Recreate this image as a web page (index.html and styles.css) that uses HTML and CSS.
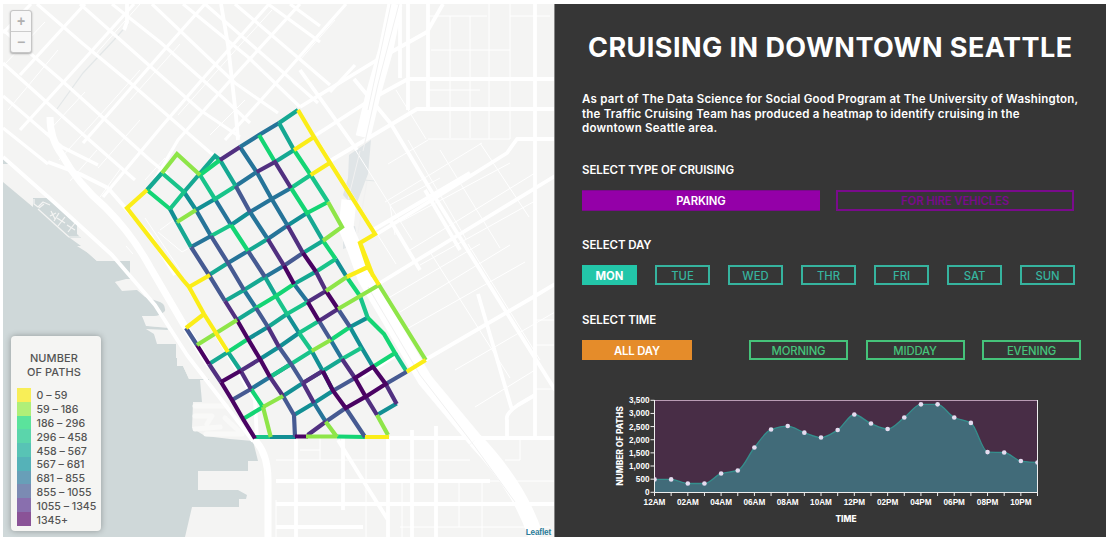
FILE: index.html
```html
<!DOCTYPE html>
<html lang="en">
<head>
<meta charset="utf-8">
<title>Cruising in Downtown Seattle</title>
<link rel="stylesheet" href="styles.css">
</head>
<body>
<main class="app">
  <section class="map">
    <svg class="map-canvas" viewBox="3 4 551 533" width="551" height="533">
      <rect class="land" x="3" y="4" width="552" height="533"/>
      <g class="water">
        <path d="M3 182L70 238L81 246L88 253L97 261H130V279L115 282L127 290H137L145 297L157 301Q166 303 165 311Q160 316 154 316H142L146 326L167 327L168 330L146 329L154 334L157 344H176V358H177V366H183L189 379H209V380H200L202 402H193L192 428L205 436L230 439L253 441L258 461H248V471H198V490H238L247 495L246 499H239V507H192L185 537H3Z"/>
        <path d="M3 158L13 164H3ZM33 198H47L58 205L68 217L77 224V234L81 238H70L33 208Z"/>
      </g>
      <g class="land-fill">
        <path d="M77 246H130V261H97L88 253ZM126 279L115 282L122 291L136 290L142 279ZM142 316L148 326L168 328L176 318ZM154 333L158 344L182 343V333ZM183 366L189 379L208 378V366Z"/>
      </g>
      <g class="street dock"><path d="M34 199V204L38 207L43 202L50 205M39 208L44 204M38 209L69 237H80M51 211L55 219M50 216L56 213M59 213L54 221M65 217L58 226M57 218L65 223M75 223L68 232M67 225L75 230M177 348H185M177 353H185M177 358H185"/></g>
      <g class="street pier"><path d="M195 406H226M195 416H212L207 424M195 429L220 427M206 434H242L225 418"/></g>
      <g class="green">
        <path d="M349 155L371 140L368 174L355 208L343 195L348 178ZM343 229L355 226L358 244L343 249Z"/>
        <path class="rail" d="M128 24L114 40L83 73L57 109M364 180L375 181"/>
      </g>
      <g class="street minor" id="blocks"></g>
      <g class="street mid">
        <path d="M3 33L31 4M20 75L85 4M20 130L70 75L134 4M83 143L165 49L205 4M103 197L162 126L200 82L269 4M152 184L178 140L228 83L300 4M225 140L270 90L346 4M330 92L355 65"/>
        <path d="M37 4L82 43L128 81L213 155M80 4L143 60L200 110L240 137M112 4L160 42L222 97L250 123M152 4L235 83L278 113M183 4L248 57L300 107M205 4L276 66L318 103M268 4L320 42M235 4L330 85M3 30L60 79L150 160L168 175M3 63L62 116L135 180M3 96L62 147L98 165M3 128L48 164M290 4L320 26"/>
      </g>
      <g class="street wide">
        <path d="M127 4V22L124 30M221 4L228 45L236 116L238 140M3 157L55 203L112 255L155 305L187 355L253 441M48 162L80 174L108 188L128 211L150 235L175 275M190 290L255 400L257 440"/>
        <path d="M443 4L427 32L377 60L300 107M555 79H408L375 97L316 135M555 109H417L330 161M555 139H517L507 153L440 195L377 234M555 176L460 234L375 286M400 4V78M408 4V110M428 4V108M535 4V437M373 230L470 173M354 79L391 124L436 199L500 302L555 390M300 70L357 150M390 220L420 270M425 190L460 250"/>
        <path d="M390 438H555M276 481H490M276 504H555M276 527H363M343 438V510M296 437V537M388 437V537M412 430V537M436 426V537M338 440L359 474L388 520M398 354L362 377M425 360L535 296L555 284M478 294L512 410M507 437V420Q505 414 518 405L535 395"/>
      </g>
      <g class="street freeway">
        <path d="M50 117Q50 139 62 155Q78 184 105 207Q132 234 150 267L184 325L210 366M253 438Q268 452 268 480V537"/>
        <path class="major" d="M395 4L386 49L373 95L363 137M349 200L346 228L355 250L365 278L425 380L475 440"/>
        <path class="major" d="M475 440Q520 487 536 537"/>
      </g>
      <g class="rail"><path d="M391 4L368 110M399 4L378 84L363 151M368 287L420 375L470 440L515 502M360 151L348 200M367 181L358 233"/></g>
      <g class="roads" id="roads"></g>
    </svg>
    <div class="zoom-control"><button>+</button><button>−</button></div>
    <div class="legend">
      <h2>NUMBER<br>OF PATHS</h2>
      <ul>
        <li><i class="y"></i><span>0 – 59</span></li>
        <li><i class="l"></i><span>59 – 186</span></li>
        <li><i class="g"></i><span>186 – 296</span></li>
        <li><i class="t"></i><span>296 – 458</span></li>
        <li><i class="s"></i><span>458 – 567</span></li>
        <li><i class="c"></i><span>567 – 681</span></li>
        <li><i class="b"></i><span>681 – 855</span></li>
        <li><i class="i"></i><span>855 – 1055</span></li>
        <li><i class="p"></i><span>1055 – 1345</span></li>
        <li><i class="d"></i><span>1345+</span></li>
      </ul>
    </div>
    <a class="attribution">Leaflet</a>
  </section>
  <section class="panel">
    <h1>CRUISING IN DOWNTOWN SEATTLE</h1>
    <p class="intro">As part of The Data Science for Social Good Program at The University of Washington,<br>the Traffic Cruising Team has produced a heatmap to identify cruising in the<br>downtown Seattle area.</p>
    <h3>SELECT TYPE OF CRUISING</h3>
    <div class="types"><button class="active">PARKING</button><button>FOR HIRE VEHICLES</button></div>
    <h3>SELECT DAY</h3>
    <div class="days"><button class="active">MON</button><button>TUE</button><button>WED</button><button>THR</button><button>FRI</button><button>SAT</button><button>SUN</button></div>
    <h3>SELECT TIME</h3>
    <div class="times"><button class="active">ALL DAY</button><button>MORNING</button><button>MIDDAY</button><button>EVENING</button></div>
    <svg class="chart" id="chart" viewBox="600 390 460 140" width="460" height="140"></svg>
  </section>
</main>
<script src="app.js"></script>
</body>
</html>
```
FILE: styles.css
```css
* { box-sizing: border-box; }
body { margin: 0; background: #fff; font-family: Inter, "Liberation Sans", sans-serif; }
.app { display: flex; width: 1109px; height: 539px; padding: 4px 3px 2px; overflow: hidden; }
button { font-family: inherit; padding: 0; }

.map { position: relative; width: 552px; height: 533px; flex: none; border-right: 1px solid #858585; }
.map-canvas { display: block; }
.land, .land-fill { fill: #f4f4f3; }
.water { fill: #cfd8d9; }
.green { fill: #e0e5e7; }
.green .rail { stroke: #e3e7e8; stroke-width: 1.2; fill: none; }
.street { fill: none; stroke: #fff; stroke-linejoin: round; }
.pier { stroke-width: 5; stroke: #f9f9f8; stroke-linecap: round; }
.dock { stroke-width: 1.2; stroke: #f4f4f3; }
.minor { stroke-width: 1; }
.mid { stroke-width: 3.2; }
.wide { stroke-width: 3.8; }
.freeway { stroke-width: 7; }
.major { stroke-width: 15; }
.rail { fill: none; stroke: #f1f1f1; stroke-width: 1; }
.roads { fill: none; stroke-width: 4.2; stroke-linecap: butt; }
.roads .y { stroke: #fbed18; }
.roads .l { stroke: #8ee548; }
.roads .g { stroke: #14d574; }
.roads .t { stroke: #19c48a; }
.roads .s { stroke: #15a892; }
.roads .c { stroke: #128f94; }
.roads .b { stroke: #267499; }
.roads .i { stroke: #465a92; }
.roads .p { stroke: #513080; }
.roads .d { stroke: #4a0363; }

.zoom-control { position: absolute; left: 7px; top: 6px; width: 22px; height: 43px; display: flex; flex-direction: column; border: 1px solid #c6c6c6; border-radius: 3px; background: #f8f8f8; box-shadow: 0 1px 2px #aaa; }
.zoom-control button { flex: 1; border: 0; background: none; color: #b0b0b0; font: 700 14px/20px "Liberation Sans", sans-serif; }
.zoom-control button + button { border-top: 1px solid #ccc; }
.legend { position: absolute; left: 8px; top: 332px; width: 90px; height: 195px; padding: 15px 6px 0; background: #f5f5f3; border-radius: 4px; box-shadow: 0 0 6px rgba(0,0,0,.3); color: #545454; }
.legend h2 { margin: 0 0 9px; text-align: center; font-size: 11px; line-height: 14px; font-weight: 500; letter-spacing: .1px; padding-right: 4px; }
.legend ul { margin: 0; padding: 0; list-style: none; }
.legend li { display: flex; height: 13.8px; gap: 5.5px; align-items: center; font-size: 10.6px; font-weight: 500; white-space: nowrap; }
.legend span { padding-top: 2px; }
.legend i { width: 14px; height: 14px; flex: none; }
.legend .y { background: #f8ee57; }
.legend .l { background: #b0ef78; }
.legend .g { background: #5be39c; }
.legend .t { background: #5bd5ab; }
.legend .s { background: #58c3b5; }
.legend .c { background: #55b2b8; }
.legend .b { background: #689fb8; }
.legend .i { background: #7b8bb3; }
.legend .p { background: #896fae; }
.legend .d { background: #8a5397; }
.attribution { position: absolute; right: 3px; bottom: 0; font: 700 8.2px/8px "Liberation Sans", sans-serif; letter-spacing: -.15px; color: #2b7c98; }

.panel { flex: none; width: 551px; height: 533px; background: #363636; color: #fff; padding: 0 0 0 27px; }
h1 { margin: 27px 0 0 6px; font-size: 27px; line-height: 34px; font-weight: 700; white-space: nowrap; letter-spacing: .44px; }
.intro { margin: 27.2px 0 0; font-size: 11.5px; line-height: 14.6px; font-weight: 600; white-space: nowrap; letter-spacing: .22px; }
h3 { margin: 0; font-size: 11.5px; line-height: 14px; font-weight: 600; white-space: nowrap; letter-spacing: -.1px; }
.intro + h3 { margin-top: 27px; }
.types + h3, .days + h3 { margin-top: 28px; }
.types, .days, .times { display: flex; margin-top: 13px; height: 20px; }
.types button, .days button, .times button { height: 20px; background: none; border: 2px solid; font-size: 11.3px; line-height: 14px; padding-top: 2px; font-weight: 500; }
.types { gap: 16px; }
.types button { width: 238px; color: #7a0b8c; height: 21px; font-weight: 600; letter-spacing: -.1px; }
.types .active { background: #9400a8; border-color: #7a098b; border-width: 1px 0; color: #fff; }
.days { gap: 18px; }
.days button { width: 55px; color: #36b49f; }
.days .active { background: #23c6a9; border-color: #23c6a9; color: #fff; font-weight: 700; }
.times { gap: 17.5px; }
.times button { width: 99px; color: #45c37a; letter-spacing: -.15px; }
.times .active { width: 110px; margin-right: 39.5px; background: #e58c2a; border-color: #e58c2a; color: #fff; font-weight: 600; }

.chart { display: block; margin: 30px 0 0 18px; }
.chart text { fill: #fff; font: 700 8.2px "Liberation Sans", sans-serif; }
.chart .plot { fill: #482d46; }
.chart .area { fill: #416b79; }
.chart .line { fill: none; stroke: #358f8d; stroke-width: 1.3; }
.chart .axis { fill: none; stroke: #eee; stroke-width: 1; }
.chart .frame { fill: none; stroke: #b99bb4; stroke-width: 1; }
.chart circle { fill: #e5dcf0; }
.chart .title { font: 800 8.4px Inter, sans-serif; }
```
FILE: app.js
```js
const NS = 'http://www.w3.org/2000/svg';
function add(parent, tag, attrs, text) {
  const el = document.createElementNS(NS, tag);
  for (const k in attrs) el.setAttribute(k, attrs[k]);
  if (text !== undefined) el.textContent = text;
  parent.appendChild(el);
  return el;
}

// Street segments by number of paths, each polyline as an SVG path.
const roads = {
  c: 'M170 209L177 222M184 192L196 210L215 199M231 225L250 212M287.5 225.5L307 213M335.7 259L346.7 277M248 339L268 327M287 314L299 333M260 359L279 347L299 333M311.7 351L322.7 371L333 390.7M350 327L361.7 347.7L373 366.7M350 327L367.7 317.7M283 396L303 383M294 415L314 403L333 390.7M377 415L396.7 403.5M270 437H296',
  b: 'M240 147L259 135L279 123M240 147L256.7 172L271.7 199L287.5 225.5M235.7 186L256.7 172M250 212L271.7 199L291 188M196 210L211 236L191 247M215 199L231 225M250 212L267.7 239L287.5 225.5M228 263L248 251M265 277L284 265.7M244 290L256 308M294 284L307.7 302M251 389L270 377L291 364M330.7 340L342 359M314 403L325.7 421.7',
  s: 'M147 190L162 173M184 192L215 156L220 160L235.7 186M279 123L298 110M279 123L294 150L275 162M307 213L323 240.7L303 253M177 222L191 247M209 275L228 263M248 251L267.7 239M225 301L244 290L265 277L276 296M294 284L316 271.7M237 320L256 308M268 327L287 314M209 364L228 352L240.7 370.7M322.7 371L342 359',
  t: 'M162 173L184 192L170 209M200 175L215 199L235.7 186M291 188L310.7 175L328 202M211 236L231 225M316 271.7L335.7 259M276 296L287 314L307.7 302M299 333L319 321M299 333L311.7 351L291 364L270 377M342 359L361.7 347.7M360 296L367.7 317.7M395 353L406.7 371.7M255 437H270',
  g: 'M147 190L170 209M200 175L220 160M259 135L275 162M294 150L310.7 175M291 188L307 213L328 202M231 225L248 251M323 240.7L335.7 259M346.7 277L360 296M256 308L276 296L294 284M228 352L248 339M330.7 340L350 327M367.7 317.7L384 334L395 353L373 366.7M251 389L263 407L243 419M337 436.5L365 437',
  i: 'M235.7 186L250 212M191 247L209 275L225 301M211 236L228 263L244 290M248 251L265 277M284 265.7L303 253M186 328L197 345M256 308L268 327M279 347L291 364L303 383L322.7 371M232 400L251 389M283 396L294 415L295 437M319 321L330.7 340M338 309L350 327M325.7 421.7L345.7 408L365 437M333 390.7L355 378M385.7 384L406.7 371.7',
  p: 'M220 160L240 147M256.7 172L275 162L291 188M267.7 239L284 265.7M287.5 225.5L303 253M316 271.7L326 291L307.7 302M319 321L338 309M225 301L237 320M268 327L279 347M209 364L221 382M240.7 370.7L260 359M240.7 370.7L251 389M270 377L283 396M303 383L314 403M303 383L322.7 371M342 359L355 378M365.7 396.7L377 415M385.7 384L396.7 404M307.7 435L325.7 421.7',
  d: 'M284 265.7L294 284M303 253L316 271.7M307.7 302L319 321M326 291L338 309M237 320L248 339L260 359L270 377M197 345L209 364M221 382L240.7 370.7M221 382L232 400L243 419L255 438.5M322.7 371L333 390.7L345.7 408L365.7 396.7L385.7 384L373 366.7L355 378L365.7 396.7M295 436.5H308',
  l: 'M162 173L177 154L200 175M177 222L196 210M328 202L342 227L323 240.7M197 345L237 320M326 291L346.7 277M338 309L379 285L425.7 360M311.7 351L330.7 340M263 407L283 396M263 407L270.7 437M325.7 421.7L337 437M306 436.5H337M377 415L388 435',
  y: 'M147 190L127 208L183 280L189 287L204 314L228 352M189 287L210 275M204 314L186 328M294 150L314 137M310.7 175L330 162.7M298 110L314 137L330 162.7L375 234L360 243L368 267L379 285M361 245L373 276M346.7 277L370 266M365 437H389M406.7 371.7L425.7 360'
};
const layer = document.getElementById('roads');
for (const k in roads) add(layer, 'path', { class: k, d: roads[k] });

// Fine side-street lines under the main street grid.
const blocks = [
  'M450 16V138M470 16V138M489 4V139M510 4V139M427 16H487M431 50H510M427 90H480M510 16H550M428 139H510',
  'M320 143L396 264M346 135L412 240M396 90L426 139M408 140L466 239M440 150L500 248M480 143L529 217M385 202L482 143M388 164L428 140M400 222L510 163M410 250L535 173M420 265L535 201M395 235L390 205L440 178',
  'M400 312L510 245M405 330L525 262M385 300L480 244M455 370L555 312M475 407L535 370M468 244L540 360M430 252L510 378M535 320H555M535 345H555M535 389H555',
  'M276 460H470M343 481H555M320 438V460M366 438V537M402 480V537M459 482V527M482 482V537M400 527H550M505 460H520V437M300 450H320M276 500V537',
  'M158 232L182 252L191 247M145 218L180 270M160 230L175 219M100 197L121 168M70 181L97 150M133 254L126 246',
  'M3 66L45 22M8 110L58 50M45 135L85 92M59 160L110 104L140 70M98 168L140 120M95 55L140 4M130 100L180 44M178 115L240 45L272 10M210 135L245 100M300 60L335 20M145 180L165 158'
];
blocks.forEach(d => add(document.getElementById('blocks'), 'path', { d }));

// Hourly chart.
const chart = document.getElementById('chart');
const x0 = 654.5, x1 = 1037.5, y0 = 492.3, y1 = 400.3;
const counts = [490, 490, 335, 335, 715, 830, 1705, 2390, 2520, 2270, 2085, 2370, 2960, 2615, 2410, 2845, 3345, 3345, 2845, 2640, 1530, 1515, 1190, 1135];
const step = (x1 - x0) / (counts.length - 1);
const pts = counts.map((v, i) => [x0 + i * step, y0 - v / 3500 * (y0 - y1)]);
const slope = pts.slice(1).map((p, i) => (p[1] - pts[i][1]) / step);
const tangent = pts.map((p, i) => {
  if (i === 0 || i === pts.length - 1) return 0;
  const a = slope[i - 1], b = slope[i];
  return a * b <= 0 ? 0 : 2 * a * b / (a + b);
});
let line = 'M' + pts[0];
for (let i = 1; i < pts.length; i++) {
  const p = pts[i - 1], q = pts[i];
  line += `C${p[0] + step / 3},${p[1] + tangent[i - 1] * step / 3} ${q[0] - step / 3},${q[1] - tangent[i] * step / 3} ${q}`;
}
add(chart, 'clipPath', { id: 'plotClip' }).innerHTML = `<rect x="${x0}" y="${y1}" width="${x1 - x0}" height="${y0 - y1}"/>`;
add(chart, 'rect', { class: 'plot', x: x0, y: y1, width: x1 - x0, height: y0 - y1 });
add(chart, 'path', { class: 'area', d: `${line}V${y0}H${x0}Z` });
add(chart, 'path', { class: 'line', d: line });
add(chart, 'path', { class: 'frame', d: `M${x0} 400.5H${x1}` });
let ticks = `M${x0} 400V492.5H${x1}V400`;
for (let v = 0; v <= 3500; v += 500) {
  const y = y0 - v / 3500 * (y0 - y1);
  ticks += `M${x0 - 4} ${y}H${x0}`;
  add(chart, 'text', { x: x0 - 5, y: y + 3, 'text-anchor': 'end' }, v.toLocaleString('en-US'));
}
pts.forEach((p, i) => {
  ticks += `M${p[0]} 492V496`;
  if (i % 2 === 0) {
    const h = String(i % 12 || 12).padStart(2, '0') + (i < 12 ? 'AM' : 'PM');
    add(chart, 'text', { x: p[0], y: 505.3, 'text-anchor': 'middle' }, h);
  }
});
add(chart, 'path', { class: 'axis', d: ticks });
const dots = add(chart, 'g', { 'clip-path': 'url(#plotClip)' });
pts.forEach(p => add(dots, 'circle', { cx: p[0], cy: p[1], r: 2.3 }));
add(chart, 'text', { class: 'title', x: 846, y: 522, 'text-anchor': 'middle' }, 'TIME');
add(chart, 'text', { class: 'title', transform: 'translate(622.5 446) rotate(-90)', 'text-anchor': 'middle' }, 'NUMBER OF PATHS');
```
